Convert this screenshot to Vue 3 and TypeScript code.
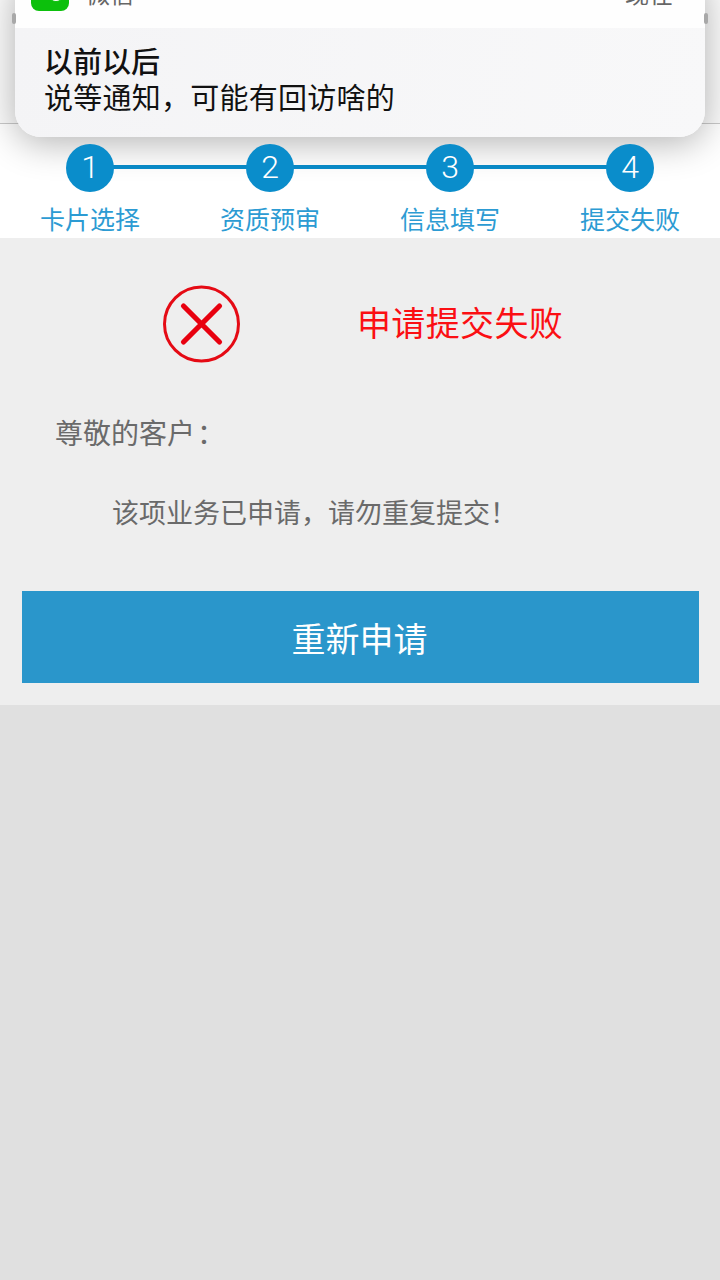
<script setup lang="ts">
const steps: string[] = ['卡片选择', '资质预审', '信息填写', '提交失败']
</script>

<template>
  <div class="page">
    <div class="topbar"></div>
    <ol class="steps">
      <li v-for="(s, i) in steps" :key="s" class="step">
        <span class="dot">{{ i + 1 }}</span>
        <span class="label">{{ s }}</span>
      </li>
    </ol>
    <section class="panel">
      <div class="result">
        <svg class="fail" viewBox="0 0 78 78" width="78" height="78" aria-hidden="true">
          <circle cx="38.5" cy="39" r="37" fill="none" stroke="#e50a14" stroke-width="3" />
          <path d="M20.5 21 L56.5 57 M56.5 21 L20.5 57" fill="none" stroke="#e8000f" stroke-width="5.2" stroke-linecap="round" />
        </svg>
        <h1 class="title">申请提交失败</h1>
      </div>
      <p class="greet">尊敬的客户<span class="colon">：</span></p>
      <p class="msg">该项业务已申请，请勿重复提交！</p>
      <button class="retry" type="button">重新申请</button>
    </section>

    <aside class="notice">
      <header class="notice-head">
        <span class="app">
          <svg class="wechat" viewBox="0 0 38 38" width="38" height="38" aria-hidden="true">
            <rect width="38" height="38" rx="8" fill="#0cc00c" />
            <ellipse cx="15" cy="17" rx="10" ry="8" fill="#fff" />
            <ellipse cx="25" cy="22" rx="8" ry="6.5" fill="#fff" stroke="#0cc00c" stroke-width="1.2" />
          </svg>
          <span>微信</span>
        </span>
        <span>现在</span>
      </header>
      <div class="notice-body">
        <strong>以前以后</strong>
        <span>说等通知，可能有回访啥的</span>
      </div>
    </aside>
  </div>
</template>

<style>
html, body { margin: 0; background: #e0e0e0; }
</style>

<style scoped>
.page {
  position: relative;
  width: 720px;
  height: 1280px;
  overflow: hidden;
  background: #e0e0e0;
  font-family: "Noto Sans CJK SC", "Noto Sans", sans-serif;
}
.topbar {
  position: relative;
  height: 124px;
  box-sizing: border-box;
  background: #fbfbfb;
  border-bottom: 1px solid #c9c9c9;
}
.topbar::before,
.topbar::after {
  content: "";
  position: absolute;
  top: 13px;
  width: 4px;
  height: 11px;
  border-radius: 2px;
  background: #a8a8a8;
  z-index: 3;
}
.topbar::before { left: 12px; }
.topbar::after { right: 12px; }
.steps {
  display: grid;
  grid-template-columns: repeat(4, 180px);
  height: 114px;
  margin: 0;
  padding: 0;
  list-style: none;
  background: #fff;
}
.step {
  position: relative;
  display: flex;
  flex-direction: column;
  align-items: center;
  padding-top: 20px;
}
.step:not(:last-child)::after {
  content: "";
  position: absolute;
  top: 41px;
  left: 90px;
  width: 180px;
  height: 4px;
  background: #0a8dcb;
}
.dot {
  position: relative;
  z-index: 1;
  width: 48px;
  height: 48px;
  border-radius: 50%;
  background: #0a8dcb;
  color: #fff;
  font: 300 32px/47px Roboto, sans-serif;
  text-align: center;
}
.label {
  margin-top: 8px;
  color: #2c9bd3;
  font-size: 25px;
  line-height: 36px;
}
.panel {
  box-sizing: border-box;
  height: 467px;
  padding: 48px 22px 0;
  background: #eeeeee;
}
.result {
  display: flex;
  align-items: center;
  height: 78px;
  margin-top: -1px;
  padding-left: 141px;
}
.title {
  margin: -4px 0 0 116px;
  color: #fb0f13;
  font-size: 34px;
  font-weight: 400;
  line-height: 78px;
  letter-spacing: 0.35px;
}
.greet, .msg {
  margin: 0;
  color: #6a6a6a;
  font-size: 27px;
  line-height: 40px;
}
.greet { margin-top: 49px; padding-left: 33px; font-size: 28px; }
.colon { margin-left: 2px; }
.msg { margin-top: 40px; padding-left: 90px; }
.retry {
  display: block;
  width: 677px;
  height: 92px;
  margin-top: 59px;
  padding: 0 2px 0 0;
  border: 0;
  background: #2a96cb;
  color: #fff;
  font: inherit;
  font-size: 34px;
}
.notice {
  position: absolute;
  top: -28px;
  left: 15px;
  width: 690px;
  height: 165px;
  overflow: hidden;
  border-radius: 26px;
  box-shadow: 0 6px 36px rgba(0, 0, 0, 0.3);
}
.notice-head {
  display: flex;
  align-items: center;
  justify-content: space-between;
  box-sizing: border-box;
  height: 56px;
  padding: 0 32px 16px 16px;
  background: #fefefe;
  color: #666;
  font-size: 24px;
}
.app { display: flex; align-items: center; gap: 17px; }
.wechat { display: block; }
.notice-body {
  display: flex;
  flex-direction: column;
  height: 109px;
  padding: 14px 29px 0;
  background: linear-gradient(100deg, #f4f4f6, #f8f8f9);
  color: #111;
  font-size: 29px;
  line-height: 36px;
  letter-spacing: 0.25px;
}
.notice-body strong { font-weight: 500; letter-spacing: 0; }
</style>
